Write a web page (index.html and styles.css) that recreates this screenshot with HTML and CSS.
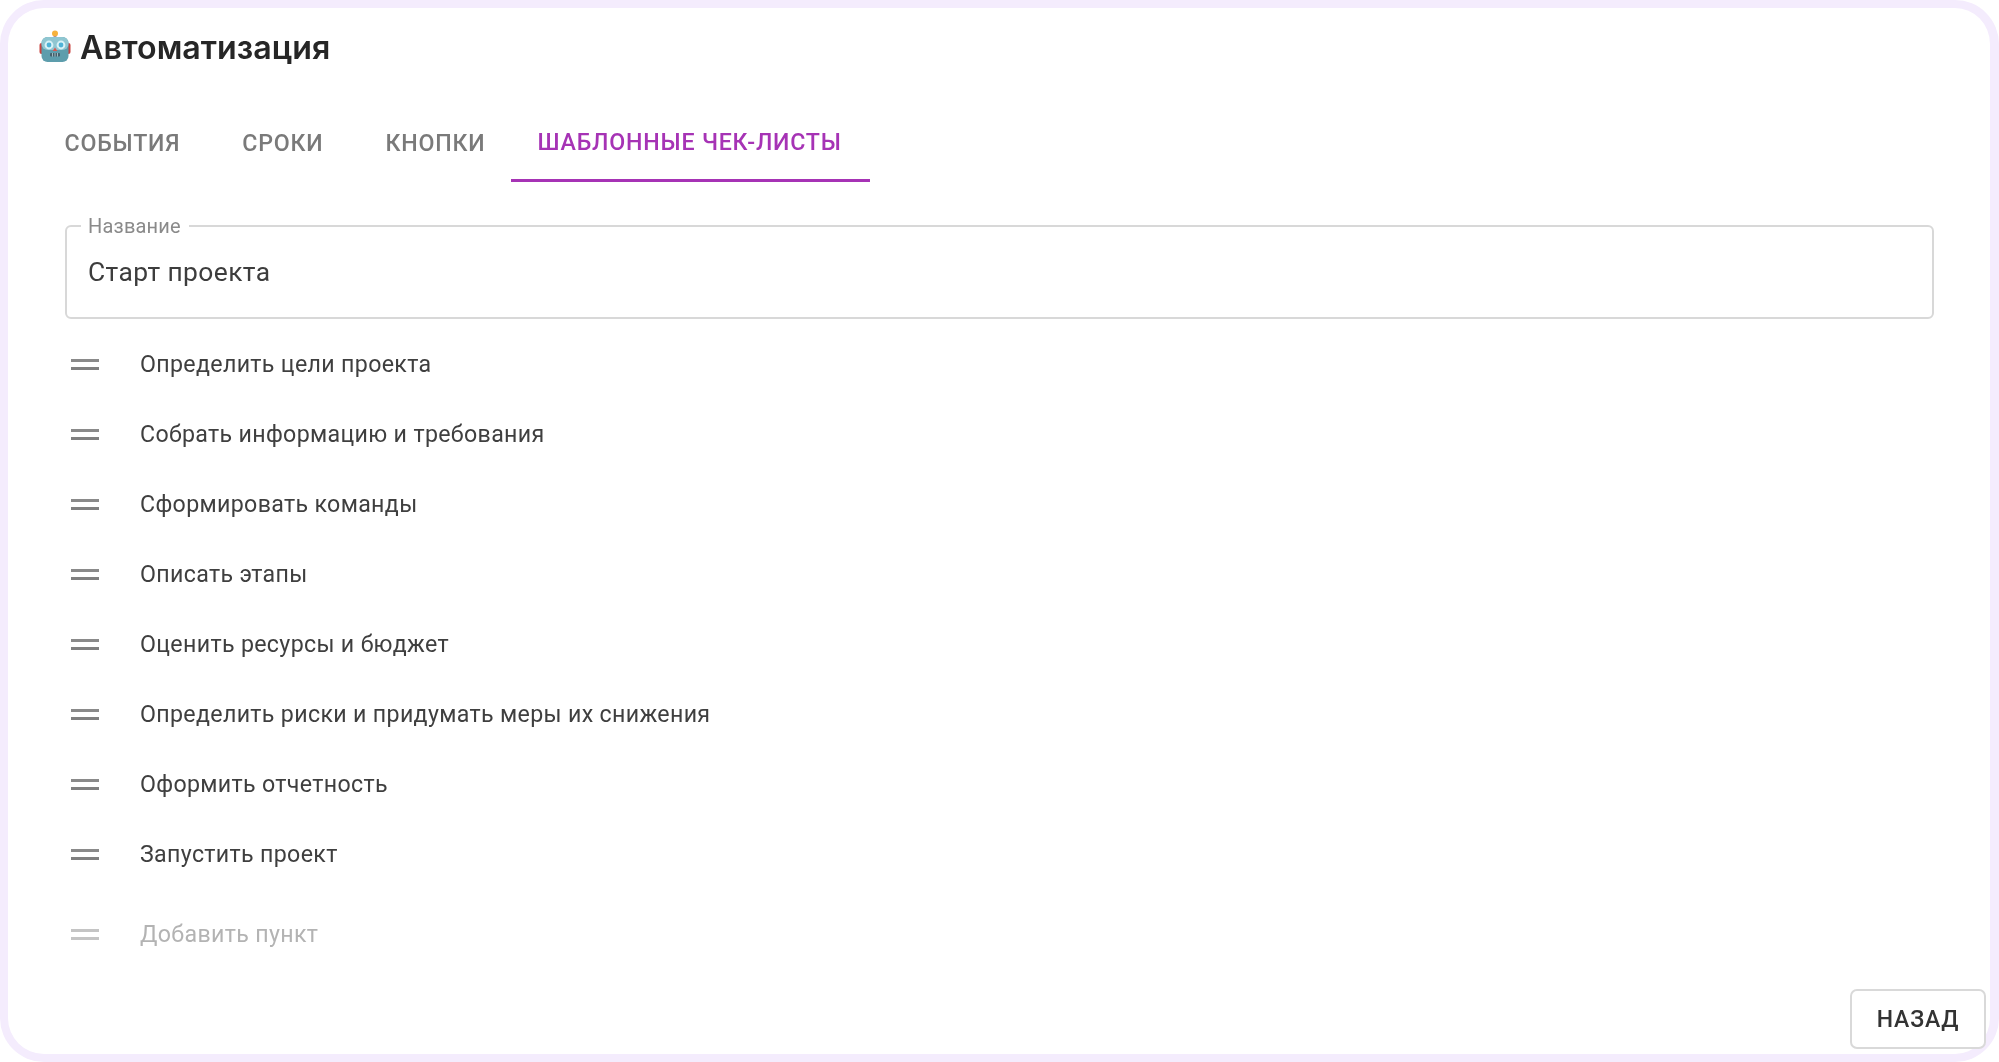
FILE: index.html
```html
<!DOCTYPE html>
<html lang="ru">
<head>
<meta charset="utf-8">
<title>Автоматизация</title>
<link rel="stylesheet" href="styles.css">
</head>
<body>
<main class="frame">
  <header class="head">
    <svg class="robot" viewBox="0 0 32 32" aria-hidden="true">
      <rect x="14.6" y="3" width="2.8" height="5" fill="#8f7fc0"/>
      <circle cx="16" cy="3.4" r="3" fill="#f6b13c"/>
      <rect x="0.5" y="13" width="4" height="11" rx="2" fill="#c9423f"/>
      <rect x="27.5" y="13" width="4" height="11" rx="2" fill="#c9423f"/>
      <rect x="2.5" y="7" width="27" height="25" rx="6" fill="#5d9dac"/>
      <rect x="2.5" y="7" width="27" height="13" rx="6" fill="#8fc6d1"/>
      <circle cx="10" cy="15" r="4.4" fill="#d8f2f6"/>
      <circle cx="22" cy="15" r="4.4" fill="#d8f2f6"/>
      <circle cx="10" cy="15" r="2.4" fill="#4fb2d6"/>
      <circle cx="22" cy="15" r="2.4" fill="#4fb2d6"/>
      <path d="M16 17.5l2.4 3.6h-4.8z" fill="#d8574f"/>
      <rect x="11" y="23" width="10" height="3.6" rx="1" fill="#43606c"/>
      <path d="M13.5 23v3.6M16 23v3.6M18.5 23v3.6" stroke="#b8d2d8" stroke-width=".8"/>
    </svg>
    <h1 class="title">Автоматизация</h1>
  </header>

  <nav class="tabs">
    <a class="tab">События</a>
    <a class="tab">Сроки</a>
    <a class="tab">Кнопки</a>
    <a class="tab tab-active">Шаблонные чек-листы</a>
  </nav>

  <section class="content">
    <fieldset class="field">
      <legend class="field-label">Название</legend>
      <div class="field-value">Старт проекта</div>
    </fieldset>

    <ul class="list">
      <li class="item"><span class="handle"></span><span>Определить цели проекта</span></li>
      <li class="item"><span class="handle"></span><span>Собрать информацию и требования</span></li>
      <li class="item"><span class="handle"></span><span>Сформировать команды</span></li>
      <li class="item"><span class="handle"></span><span>Описать этапы</span></li>
      <li class="item"><span class="handle"></span><span>Оценить ресурсы и бюджет</span></li>
      <li class="item"><span class="handle"></span><span>Определить риски и придумать меры их снижения</span></li>
      <li class="item"><span class="handle"></span><span>Оформить отчетность</span></li>
      <li class="item"><span class="handle"></span><span>Запустить проект</span></li>
      <li class="item item-add"><span class="handle"></span><span>Добавить пункт</span></li>
    </ul>
  </section>

  <footer class="foot">
    <button class="back" type="button">Назад</button>
  </footer>
</main>
</body>
</html>
```

FILE: styles.css
```css
* { box-sizing: border-box; }
html, body { margin: 0; height: 100%; background: #fff; }
body { font-family: Roboto, "Liberation Sans", sans-serif; overflow: hidden; }

.frame {
  height: 1062px;
  border: solid #f4ecfd;
  border-width: 8px 9px 8px 8px;
  border-radius: 44px;
  display: flex;
  flex-direction: column;
  background: #fff;
  filter: blur(0.45px);
}

.head {
  display: flex;
  align-items: center;
  gap: 9px;
  height: 80px;
  padding: 0 0 0 31px;
}
.robot { width: 32px; height: 32px; margin-top: -4px; flex: none; }
.title {
  margin: 0;
  font: 600 32.2px/1.2 Inter, Roboto, sans-serif;
  color: #262626;
  letter-spacing: 0;
}

.tabs {
  display: flex;
  padding-left: 25.5px;
  height: 94px;
}
.tab {
  display: flex;
  align-items: center;
  height: 100%;
  padding: 16px 31px 0;
  font-size: 23.2px;
  font-weight: 500;
  letter-spacing: 0.8px;
  text-transform: uppercase;
  color: #7a7a7a;
}
.tab-active {
  color: #a633b5;
  margin-left: -5px;
  padding: 16px 28px 0 26px;
  border-bottom: 3px solid #a633b5;
}

.content { padding: 0 56px 0 57px; }

.field {
  margin: 33px 0 0;
  padding: 0 22px 0 14px;
  height: 104px;
  border: 2px solid #d8d8d8;
  border-radius: 6px;
}
.field-label {
  padding: 0 8px 0 7px;
  font-size: 20px;
  line-height: 22px;
  color: #8a8a8a;
  letter-spacing: 0.2px;
}
.field-value {
  padding: 0 0 0 7px;
  margin-top: 15px;
  font-size: 26.4px;
  line-height: 40px;
  color: #3d3d3d;
  letter-spacing: 0.4px;
}

.list { margin: 10px 0 0; padding: 0; list-style: none; }
.item {
  display: flex;
  align-items: center;
  height: 70px;
  font-size: 23.2px;
  letter-spacing: 0.33px;
  color: #3f3f3f;
}
.handle {
  flex: none;
  width: 28px;
  height: 11px;
  margin: 0 41px 0 6px;
  border-top: 3.5px solid #8a8a8a;
  border-bottom: 3.5px solid #808080;
}
.item-add { margin-top: 10px; color: #b3b3b3; }
.item-add .handle { border-color: #c4c4c4; }

.foot {
  margin-top: auto;
  display: flex;
  justify-content: flex-end;
  padding: 0 4px 5px 0;
}
.back {
  width: 136px;
  height: 60px;
  background: #fff;
  border: 2px solid #d9d9d9;
  border-radius: 7px;
  font: 500 23px Roboto, sans-serif;
  letter-spacing: 0.8px;
  text-transform: uppercase;
  color: #333;
}
```
